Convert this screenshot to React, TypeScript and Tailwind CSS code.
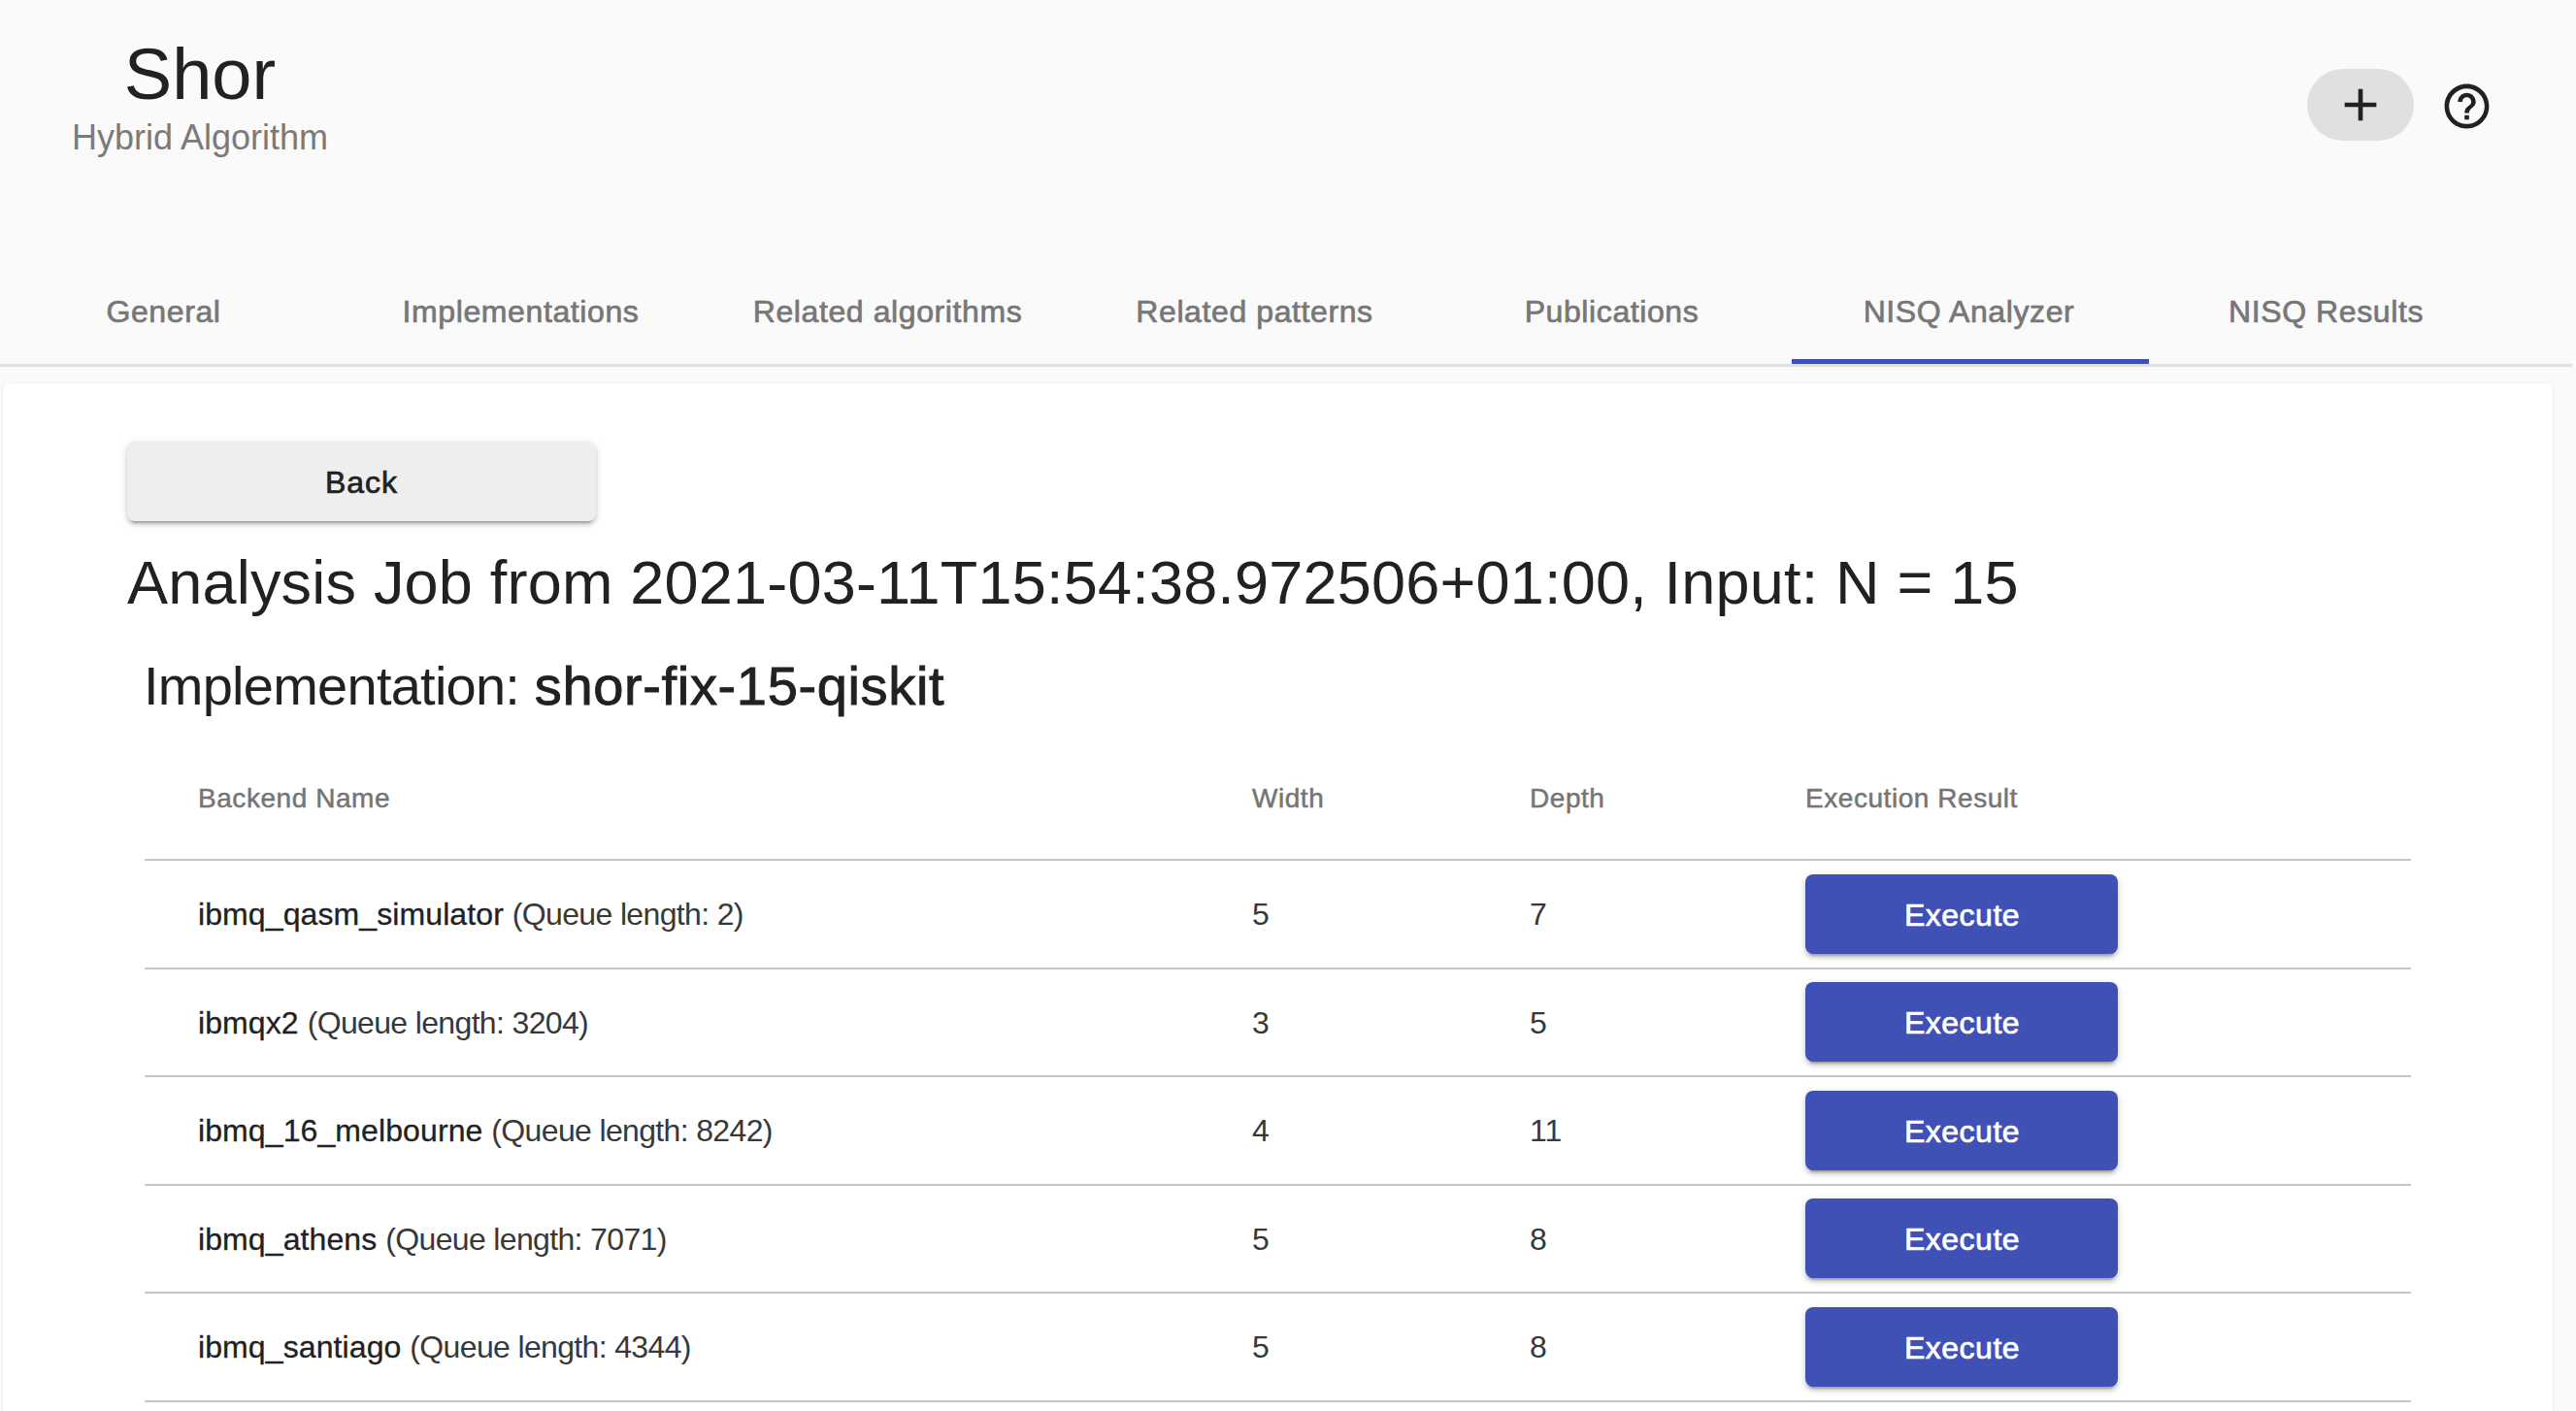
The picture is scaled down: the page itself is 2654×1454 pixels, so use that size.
const font = "[font-family:'Liberation_Sans',Arial,sans-serif]";

const tabs = [
  { label: "General", w: "w-[368px]" },
  { label: "Implementations", w: "w-[368px]" },
  { label: "Related algorithms", w: "w-[388px]" },
  { label: "Related patterns", w: "w-[368px]" },
  { label: "Publications", w: "w-[368px]" },
  { label: "NISQ Analyzer", w: "w-[368px]", active: true },
  { label: "NISQ Results", w: "w-[368px]" },
];

const rows = [
  { name: "ibmq_qasm_simulator", queue: 2, width: 5, depth: 7 },
  { name: "ibmqx2", queue: 3204, width: 3, depth: 5 },
  { name: "ibmq_16_melbourne", queue: 8242, width: 4, depth: 11 },
  { name: "ibmq_athens", queue: 7071, width: 5, depth: 8 },
  { name: "ibmq_santiago", queue: 4344, width: 5, depth: 8 },
];

const raised =
  "shadow-[0_6px_2px_-4px_rgba(0,0,0,0.2),0_4px_4px_0_rgba(0,0,0,0.14),0_2px_10px_0_rgba(0,0,0,0.12)]";

function ExecuteButton({ label = "Execute" }: { label?: string }) {
  return (
    <button
      className={`flex h-[82px] w-[322px] items-center justify-center rounded-lg bg-[#3f51b5] pl-[1px] pt-[2px] text-[32px] tracking-[0.5px] text-white [-webkit-text-stroke:0.7px_white] ${raised}`}
    >
      {label}
    </button>
  );
}

export default function App() {
  return (
    <div className={`h-[1454px] w-[2654px] overflow-hidden bg-[#fafafa] text-[#212121] ${font}`}>
      <header className="flex h-[281px] items-start justify-between">
        <div className="ml-[54px] mt-[35px] flex w-[304px] flex-col items-center">
          <h1 className="text-[74px] leading-[84px]">Shor</h1>
          <p className="mt-[2px] text-[36px] leading-[42px] text-[#7a7a7a]">Hybrid Algorithm</p>
        </div>
        <div className="mr-[85px] mt-[71px] flex items-start gap-[27px]">
          <button className="flex h-[74px] w-[110px] items-center justify-center rounded-full bg-[#e0e0e0]">
            <svg viewBox="0 0 24 24" className="h-[56px] w-[56px] fill-[#212121]">
              <path d="M19 13h-6v6h-2v-6H5v-2h6V5h2v6h6v2z" />
            </svg>
          </button>
          <svg viewBox="0 0 24 24" className="mt-[11px] h-[55px] w-[55px] fill-[#212121]">
            <path d="M11 18h2v-2h-2v2zm1-16C6.48 2 2 6.48 2 12s4.48 10 10 10 10-4.48 10-10S17.52 2 12 2zm0 18c-4.41 0-8-3.59-8-8s3.59-8 8-8 8 3.59 8 8-3.59 8-8 8zm0-14c-2.21 0-4 1.79-4 4h2c0-1.1.9-2 2-2s2 .9 2 2c0 2-3 1.75-3 5h2c0-2.25 3-2.5 3-5 0-2.21-1.79-4-4-4z" />
          </svg>
        </div>
      </header>

      <div className="mr-[4px] border-b-[3px] border-[#e0e0e0]">
        <nav className="-ml-[14px] flex h-[94px]">
          {tabs.map((t) => (
            <div
              key={t.label}
              className={`flex h-full ${t.w} shrink-0 items-center justify-center border-b-[5px] pb-[9px] pr-[3px] text-[32px] tracking-[0.6px] text-[#777777] [-webkit-text-stroke:0.7px_#777777] ${
                t.active ? "border-[#3f51b5]" : "border-transparent"
              }`}
            >
              {t.label}
            </div>
          ))}
        </nav>
      </div>

      <main className="ml-[3px] mr-[24px] mt-[17px] h-[1200px] rounded-lg bg-white pl-[128px] pr-[143px] pt-[60px] shadow-[0_1px_3px_0_rgba(0,0,0,0.12)]">
        <button
          className={`flex h-[82px] w-[483px] items-center justify-center rounded-lg bg-[#eeeeee] pt-[2px] text-[32px] tracking-[1px] [-webkit-text-stroke:0.7px_#212121] ${raised}`}
        >
          Back
        </button>
        <h2 className="mt-[21px] text-[63px] leading-[84px] tracking-[0.2px]">
          Analysis Job from 2021-03-11T15:54:38.972506+01:00, Input: N = 15
        </h2>
        <h3 className="ml-[17px] mt-[32px] text-[56px] leading-[66px]">
          <span className="tracking-[-0.75px]">Implementation:</span>{" "}
          <span className="tracking-[0.65px] [-webkit-text-stroke:0.9px_#212121]">shor-fix-15-qiskit</span>
        </h3>
        <table className="ml-[18px] mt-[21px] w-[2335px] table-fixed border-collapse">
          <colgroup>
            <col className="w-[1086px]" />
            <col className="w-[286px]" />
            <col className="w-[285px]" />
            <col />
          </colgroup>
          <thead>
            <tr className="h-[125px] border-b-2 border-[#c6c6c6] text-left text-[28px] tracking-[0.55px] text-[#757575] [-webkit-text-stroke:0.5px_#757575]">
              <th className="pl-[55px] font-normal">Backend Name</th>
              <th className="pl-[55px] font-normal">Width</th>
              <th className="pl-[55px] font-normal">Depth</th>
              <th className="pl-[54px] font-normal">Execution Result</th>
            </tr>
          </thead>
          <tbody className="text-[32px]">
            {rows.map((r) => (
              <tr key={r.name} className="h-[111.5px] border-b-2 border-[#c6c6c6]">
                <td className="pl-[55px] pt-[1px]">
                  <span className="tracking-[0.1px] [-webkit-text-stroke:0.3px_#212121]">{r.name}</span>{" "}
                  <span className="tracking-[-0.65px] text-[#383838]">(Queue length: {r.queue})</span>
                </td>
                <td className="pl-[55px] pt-[1px] text-[#383838]">{r.width}</td>
                <td className="pl-[55px] pt-[1px] text-[#383838]">{r.depth}</td>
                <td className="pl-[54px]">
                  <ExecuteButton />
                </td>
              </tr>
            ))}
            <tr className="h-[111.5px]">
              <td />
              <td />
              <td />
              <td className="pl-[54px]">
                <ExecuteButton label="" />
              </td>
            </tr>
          </tbody>
        </table>
      </main>
    </div>
  );
}
